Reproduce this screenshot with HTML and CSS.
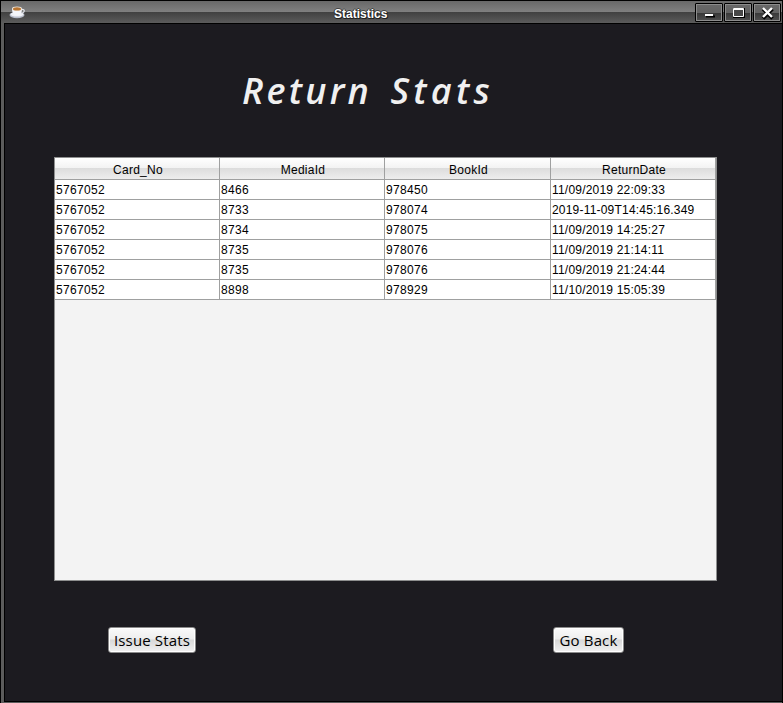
FILE: index.html
```html
<!DOCTYPE html>
<html lang="en">
<head>
<meta charset="utf-8">
<title>Statistics</title>
<link rel="stylesheet" href="styles.css">
</head>
<body>
<div class="window">
  <header class="titlebar">
    <svg class="cup" width="17" height="14" viewBox="0 0 17 14">
      <ellipse cx="8" cy="10" rx="7.5" ry="3.2" fill="#b8bdca"/>
      <ellipse cx="8" cy="9.3" rx="6.5" ry="2.3" fill="#eef0f5"/>
      <path d="M12 4.5q4-.5 3 2.2-.8 1.8-4 1.8" fill="none" stroke="#e5e8ef" stroke-width="1.2"/>
      <path d="M3 3.5h10q0 5-3 7H6q-3-2-3-7z" fill="#f5f6fa"/>
      <ellipse cx="8" cy="3.7" rx="5" ry="2.2" fill="#eee5da"/>
      <ellipse cx="8" cy="3.9" rx="4" ry="1.6" fill="#b87532"/>
    </svg>
    <div class="caption">Statistics</div>
    <div class="controls">
      <div class="control"><svg width="26" height="17"><path d="M10 12.5h9" stroke="#000" stroke-width="2"/><path d="M9 10h8v2h-8z" fill="#fff"/></svg></div>
      <div class="control"><svg width="26" height="17"><path d="M8 4h12v10H8z" fill="#000"/><path d="M8.5 4.5h10v8h-10z" fill="#484848" stroke="#fff"/><path d="M9 5.5h9" stroke="#fff"/></svg></div>
      <div class="control"><svg width="26" height="17"><path d="M9 5l9.5 9.5m0-9.5L9 14.5" stroke="#000" stroke-width="3.5"/><path d="M9 4l9 9m0-9l-9 9" stroke="#fff" stroke-width="2.4"/></svg></div>
    </div>
  </header>
  <main class="content">
    <h1 class="heading">Return <span class="word">Stats</span></h1>
    <div class="pane">
      <div class="row head"><div>Card_No</div><div>MediaId</div><div>BookId</div><div>ReturnDate</div></div>
      <div class="row"><div>5767052</div><div>8466</div><div>978450</div><div>11/09/2019 22:09:33</div></div>
      <div class="row"><div>5767052</div><div>8733</div><div>978074</div><div>2019-11-09T14:45:16.349</div></div>
      <div class="row"><div>5767052</div><div>8734</div><div>978075</div><div>11/09/2019 14:25:27</div></div>
      <div class="row"><div>5767052</div><div>8735</div><div>978076</div><div>11/09/2019 21:14:11</div></div>
      <div class="row"><div>5767052</div><div>8735</div><div>978076</div><div>11/09/2019 21:24:44</div></div>
      <div class="row"><div>5767052</div><div>8898</div><div>978929</div><div>11/10/2019 15:05:39</div></div>
    </div>
    <div class="actions">
      <button class="btn issue">Issue Stats</button>
      <button class="btn back">Go Back</button>
    </div>
  </main>
</div>
</body>
</html>
```
FILE: styles.css
```css
* { box-sizing: border-box; }
body { margin: 0; overflow: hidden; font: 12px "Liberation Sans", Arial, sans-serif; }
.window {
  width: 783px; height: 703px;
  background: #5c5c5c;
  border: 1px solid #000; border-bottom: 0;
  padding: 0 0 1px 3px;
}
.titlebar {
  height: 22px; margin-left: -3px; padding-left: 8px;
  display: grid; grid-template-columns: 17px 1fr 87px;
  background: linear-gradient(#686868, #808080 11px, #404040 11px, #5c5c5c);
}
.cup { margin-top: 4px; }
.caption {
  padding: 5px 0 0 308px;
  color: #fff; font-weight: bold; line-height: 16px; white-space: nowrap;
  text-shadow: 1px 1px #222, -1px 0 #333, 0 -1px #444, 1px 0 #222, 0 1px #222;
}
.controls { display: flex; gap: 1px; padding-top: 2px; }
.control {
  width: 28px; height: 19px;
  border: 1px solid #000; border-radius: 1px;
  box-shadow: inset 0 0 0 1px #8c8c8c;
  background: linear-gradient(#686868, #626262 9px, #383838 9px, #505050);
}
.control svg { display: block; }
.content {
  height: 679px;
  background: #1c1b20;
  border: 1px solid #000; border-right: 0;
  padding-left: 49px;
}
.heading {
  margin: 0; height: 133px; padding: 40px 0 0 188px;
  color: #f0f0f0; white-space: nowrap;
  font: italic 600 36px/53px "Open Sans", "Noto Sans", sans-serif;
  letter-spacing: 3.2px;
}
.word { margin-left: 6px; letter-spacing: 4.2px; }
.pane {
  width: 663px; height: 424px;
  background: #f3f3f3; border: 1px solid #8e8f8f;
}
.row {
  display: grid; grid-template-columns: 165px 165px 166px 165px; grid-template-rows: 100%;
  height: 20px; line-height: 20px;
  background: #fff; color: #000;
}
.row > div {
  padding-left: 1px; letter-spacing: .33px; white-space: nowrap;
  border-right: 1px solid #9fa0a0; border-bottom: 1px solid #9fa0a0;
}
.row > div:last-child { letter-spacing: .2px; }
.head {
  height: 22px; line-height: 24px; text-align: center;
  background: linear-gradient(#fff, #f3f3f3 10px, #dcdcdc 10px, #efefef);
}
.row.head > div { padding-left: 2px; letter-spacing: .25px; }
.actions { display: flex; padding: 46px 0 0 54px; }
.btn {
  height: 26px; padding: 0; white-space: nowrap;
  border: 1px solid #8b8b8b; border-radius: 3px;
  box-shadow: inset 0 0 0 1px #fff;
  background: linear-gradient(#fafafa, #eee 11px, #d8d8d8 12px, #f1f1f1);
  color: #000; font: 15px/22px "Open Sans", sans-serif; letter-spacing: .15px;
}
.issue { width: 88px; }
.back { width: 71px; margin-left: 357px; }
```
